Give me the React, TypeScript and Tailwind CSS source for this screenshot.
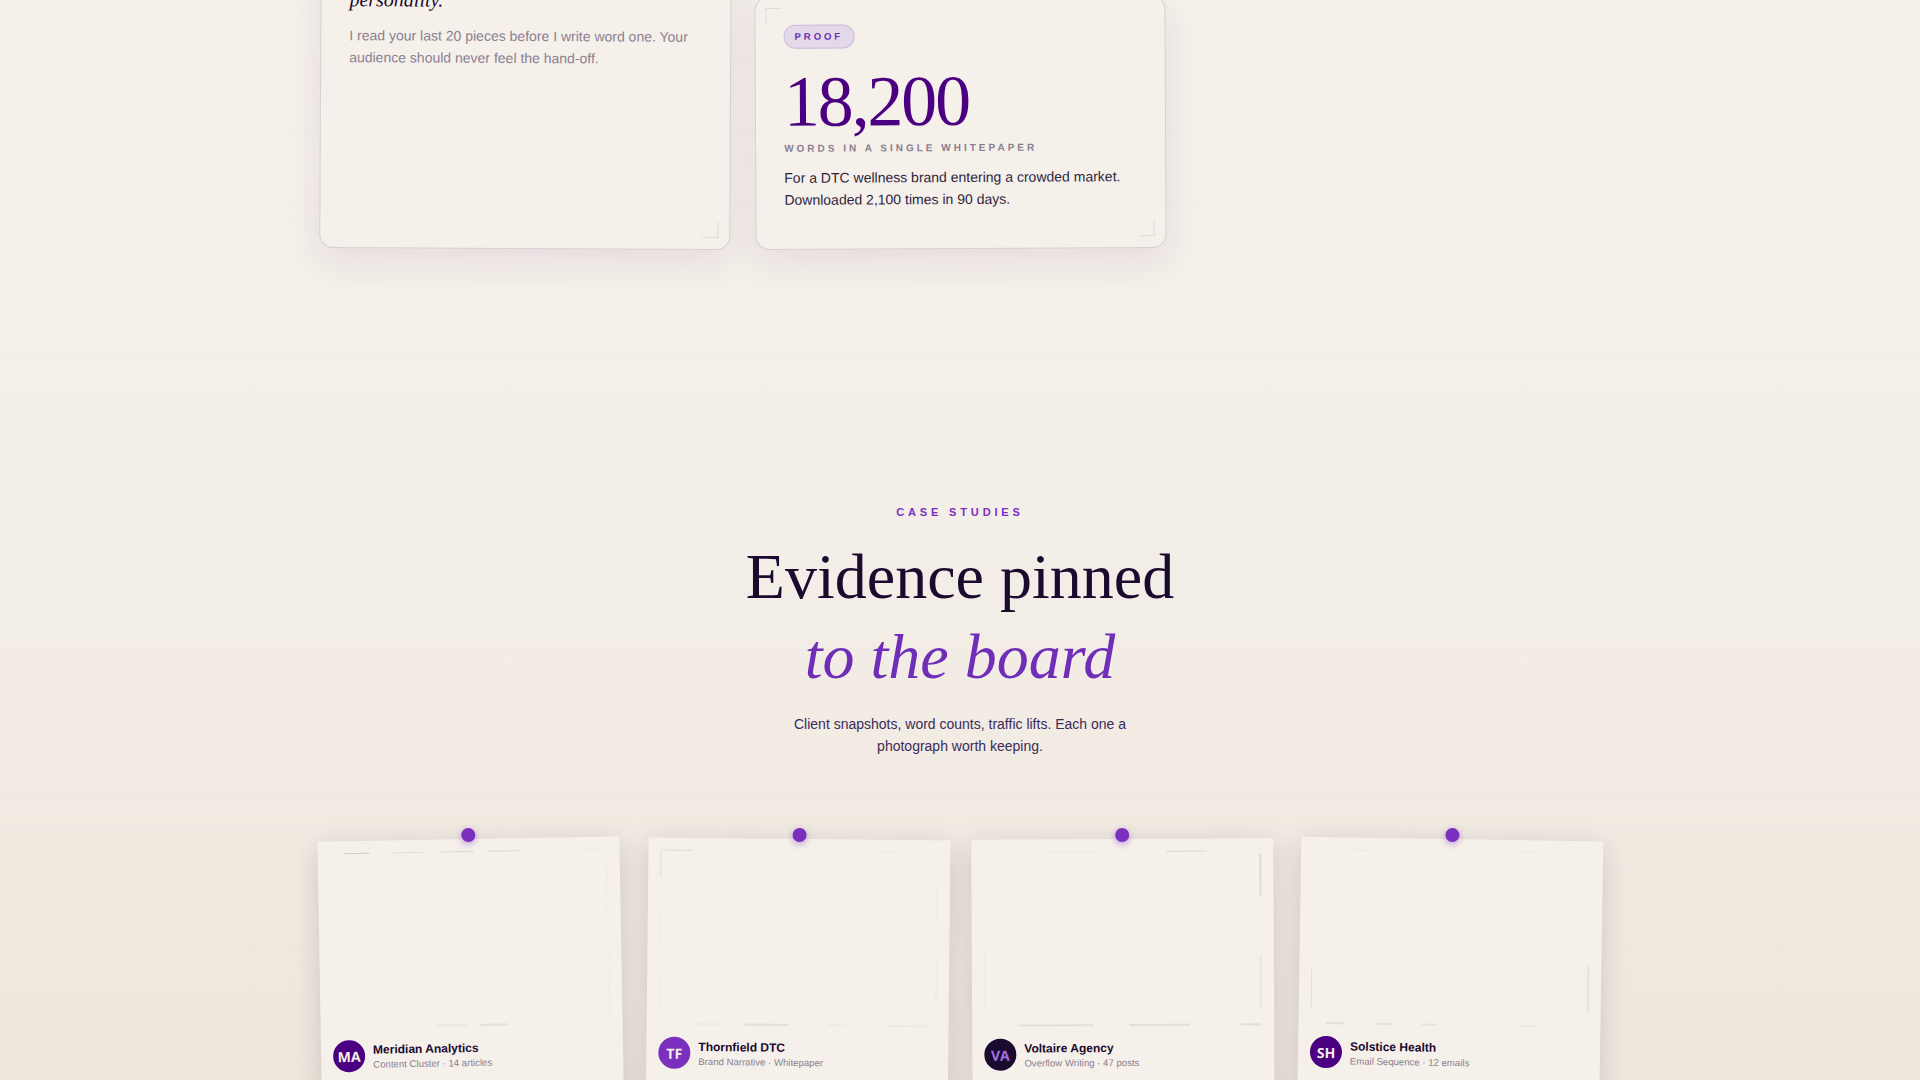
import React from "react";

type Line = [number, number, number, number, number];

const cases: {
  initials: string;
  name: string;
  meta: string;
  avatar: string;
  rotate: string;
  lines: Line[];
}[] = [
  {
    initials: "MA",
    name: "Meridian Analytics",
    meta: "Content Cluster · 14 articles",
    avatar: "bg-[#4b0082] text-[#f5f0ea]",
    rotate: "rotate-[-1deg]",
    lines: [
      [15, 0, 40, 0, 0.5],
      [61, 0, 93, 0, 0.25],
      [110, 0, 144, 0, 0.4],
      [158, 0, 190, 0, 0.35],
      [253, 0, 276, 0, 0.08],
      [0, 30, 0, 170, 0.03],
      [277, 10, 277, 170, 0.03],
      [104, 174, 135, 174, 0.12],
      [148, 174, 175, 174, 0.25],
    ],
  },
  {
    initials: "TF",
    name: "Thornfield DTC",
    meta: "Brand Narrative · Whitepaper",
    avatar: "bg-[#7b2fbe] text-[#f5f0ea]",
    rotate: "rotate-[0.6deg] translate-x-[1px]",
    lines: [
      [2, 0, 33, 0, 0.3],
      [78, 0, 128, 0, 0.08],
      [212, 0, 250, 0, 0.08],
      [0, 0, 0, 28, 0.25],
      [0, 60, 0, 95, 0.06],
      [0, 120, 0, 165, 0.06],
      [277, 32, 277, 70, 0.06],
      [277, 105, 277, 152, 0.06],
      [36, 174, 61, 174, 0.08],
      [86, 174, 130, 174, 0.28],
      [168, 174, 187, 174, 0.1],
      [229, 174, 271, 174, 0.08],
    ],
  },
  {
    initials: "VA",
    name: "Voltaire Agency",
    meta: "Overflow Writing · 47 posts",
    avatar: "bg-[#1a0a2e] text-[#a56fe0]",
    rotate: "rotate-[-0.3deg]",
    lines: [
      [65, 0, 118, 0, 0.1],
      [183, 0, 223, 0, 0.35],
      [277, 3, 277, 45, 0.3],
      [277, 105, 277, 158, 0.15],
      [0, 100, 0, 160, 0.07],
      [35, 174, 109, 174, 0.25],
      [145, 174, 206, 174, 0.25],
      [256, 174, 277, 174, 0.25],
    ],
  },
  {
    initials: "SH",
    name: "Solstice Health",
    meta: "Email Sequence · 12 emails",
    avatar: "bg-[#4b0082] text-[#f5f0ea]",
    rotate: "rotate-[0.9deg] translate-x-[1px]",
    lines: [
      [36, 0, 57, 0, 0.1],
      [205, 0, 222, 0, 0.1],
      [0, 120, 0, 160, 0.25],
      [277, 112, 277, 160, 0.2],
      [15, 174, 34, 174, 0.25],
      [65, 174, 82, 174, 0.2],
      [111, 174, 126, 174, 0.2],
      [210, 174, 225, 174, 0.1],
    ],
  },
];

const CornerMark = ({ className }: { className: string }) => (
  <span className={`absolute w-4 h-4 border-[#e0d7da] ${className}`} />
);

export default function App() {
  return (
    <div className="h-screen overflow-hidden bg-gradient-to-b from-[#f5f0ea] via-[#f3eee8] via-50% to-[#eee7dc] font-['Liberation_Sans',Arial,sans-serif]">
      <div className="h-full bg-[repeating-linear-gradient(0deg,transparent_0px,transparent_72px,rgba(90,70,90,0.012)_72px,rgba(90,70,90,0.012)_74px)]">
        <div className="w-[1280px] mx-auto pt-px -mt-[61px]">
          <div className="grid grid-cols-3 gap-6 items-end">
            <div className="relative h-[309px] rotate-[0.28deg] rounded-[14px] border border-[#d9cfd6] bg-[#f5f0ea] px-7 pt-[45px] shadow-[0_10px_34px_rgba(75,30,110,0.09)]">
              <h3 className="font-['Liberation_Serif',serif] italic text-[20px] leading-[28px] text-[#1a0a2e]">
                personality.
              </h3>
              <p className="mt-[11px] text-[14px] leading-[22px] text-[#8a7f92]">
                I read your last 20 pieces before I write word one. Your audience should never feel the hand-off.
              </p>
              <CornerMark className="right-[11px] bottom-[11px] border-r border-b" />
            </div>

            <div className="relative h-[253px] rotate-[-0.28deg] rounded-[14px] border border-[#d9cfd6] bg-[#f5f0ea] px-7 pt-[25px] shadow-[0_10px_34px_rgba(75,30,110,0.09)]">
              <CornerMark className="left-[10px] top-[10px] border-l border-t" />
              <span className="inline-block rounded-full border border-[#c9b8dc] bg-[#e3d9e9] px-[10px] py-[4px] text-[9.6px] leading-[14px] font-bold tracking-[0.3em] text-[#6b2fb5]">
                PROOF
              </span>
              <div className="mt-[13px] font-['Liberation_Serif',serif] text-[72px] leading-[80px] tracking-[-0.03em] text-[#4b0082]">
                18,200
              </div>
              <div className="text-[10px] leading-[14px] font-bold tracking-[0.3em] text-[#8a7f92]">
                WORDS IN A SINGLE WHITEPAPER
              </div>
              <p className="mt-[11px] text-[14px] leading-[22px] text-[#2d1f3d]">
                For a DTC wellness brand entering a crowded market. Downloaded 2,100 times in 90 days.
              </p>
              <CornerMark className="right-[11px] bottom-[11px] border-r border-b" />
            </div>
          </div>

          <div className="mt-[255px] text-center">
            <div className="text-[11px] leading-[16px] font-bold tracking-[0.35em] text-[#7b2fbe]">
              CASE STUDIES
            </div>
            <h2 className="mt-[17px] font-['Liberation_Serif',serif] text-[64px] leading-[80px] font-normal text-[#1a0a2e]">
              Evidence pinned
              <br />
              <em className="text-[#6f2db8]">to the board</em>
            </h2>
            <p className="mt-[16px] mx-auto w-[400px] text-[14px] leading-[22px] text-[#3d2a5a]">
              Client snapshots, word counts, traffic lifts. Each one a
              <br />
              photograph worth keeping.
            </p>
          </div>

          <div className="mt-[82px] grid grid-cols-4 gap-6">
            {cases.map((item) => (
              <div
                key={item.name}
                className={`relative h-[300px] bg-[#f5f0ea] p-3 shadow-[0_6px_26px_rgba(60,30,80,0.18)] ${item.rotate}`}
              >
                <span className="absolute -top-[11px] left-1/2 -translate-x-1/2 w-[14px] h-[14px] rounded-full bg-[#7b2fbe] shadow-[0_2px_6px_rgba(123,47,190,0.45)]" />
                <svg viewBox="0 0 278 175" className="block w-full h-[175px] blur-[0.4px]">
                  {item.lines.map(([x1, y1, x2, y2, opacity], idx) => (
                    <line
                      key={idx}
                      x1={x1}
                      y1={y1}
                      x2={x2}
                      y2={y2}
                      stroke="#6e6652"
                      strokeWidth="1"
                      opacity={opacity}
                    />
                  ))}
                </svg>
                <div className="mt-[12px] flex items-center gap-2">
                  <div
                    className={`w-8 h-8 rounded-full flex items-center justify-center font-['Open_Sans',sans-serif] text-[14px] font-bold ${item.avatar}`}
                  >
                    {item.initials}
                  </div>
                  <div>
                    <div className="text-[12px] leading-[16px] font-bold text-[#1a0a2e]">{item.name}</div>
                    <div className="text-[9.6px] leading-[13px] text-[#8a7f92]">{item.meta}</div>
                  </div>
                </div>
              </div>
            ))}
          </div>
        </div>
      </div>
    </div>
  );
}
